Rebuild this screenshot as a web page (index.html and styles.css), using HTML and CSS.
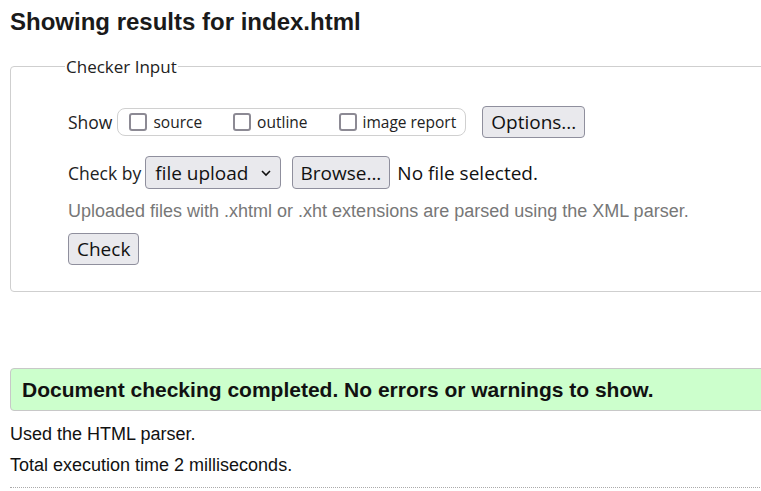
FILE: index.html
```html
<!DOCTYPE html>
<html>
<head>
<meta charset="utf-8">
<link rel="stylesheet" href="styles.css">
</head>
<body>
<div class="page">
  <h1 class="title">Showing results for index.html</h1>
  <fieldset class="checker">
    <legend class="legend">Checker Input</legend>
    <div class="row row-show">
      <span class="label">Show</span>
      <span class="group">
        <label class="opt"><span class="box"></span>source</label>
        <label class="opt"><span class="box"></span>outline</label>
        <label class="opt"><span class="box"></span>image report</label>
      </span>
      <span class="btn btn-options">Options...</span>
    </div>
    <div class="row row-check">
      <span class="label">Check by</span>
      <span class="btn select">file upload <svg class="chev" width="12" height="8" viewBox="0 0 12 8"><path d="M2 2 L6 6 L10 2" fill="none" stroke="#111" stroke-width="1.6"/></svg></span>
      <span class="btn btn-browse">Browse...</span>
      <span class="nofile">No file selected.</span>
    </div>
    <p class="hint">Uploaded files with .xhtml or .xht extensions are parsed using the XML parser.</p>
    <span class="btn btn-check">Check</span>
  </fieldset>
  <div class="success">Document checking completed. No errors or warnings to show.</div>
  <p class="info info-first">Used the HTML parser.</p>
  <p class="info">Total execution time 2 milliseconds.</p>
  <hr class="dotted">
</div>
</body>
</html>
```

FILE: styles.css
```css
html, body { margin: 0; padding: 0; background: #fff; overflow: hidden; }
body { font-family: "Liberation Sans", Arial, sans-serif; color: #111; }
.page { width: 800px; padding: 0 0 0 10px; }
.title { font-size: 24px; font-weight: bold; margin: 8px 0 0; line-height: 28px; color: #1a1a1a; }
.checker { margin: 19px 0 0; border: 1px solid #cfcfcf; border-radius: 4px; padding: 14px 0 26px 57px; font-family: "Open Sans", "Noto Sans", sans-serif; }
.legend { font-size: 17px; padding: 0 1px; margin-left: -3px; color: #222; }
.row { display: flex; align-items: center; font-size: 17.5px; color: #222; }
.row-show { height: 32px; margin-top: 14px; }
.label { margin-right: 5px; }
.row-check .label { margin-right: 4px; }
.group { display: inline-flex; align-items: center; border: 1px solid #d0d0d0; border-radius: 8px; height: 28px; box-sizing: border-box; padding: 0 9px 0 11px; }
.opt { display: inline-flex; align-items: center; margin-right: 31px; font-size: 15.5px; }
.opt:last-child { margin-right: 0; }
.box { width: 14px; height: 14px; border: 2px solid #8c8a94; border-radius: 3px; margin-right: 6px; }
.btn { display: inline-flex; align-items: center; background: #e9e9ed; border: 1px solid #8f8f9d; border-radius: 4px; font-size: 19px; color: #111; padding: 0 8px; height: 32px; box-sizing: border-box; font-family: "Open Sans", "Noto Sans", sans-serif; }
.btn-options { margin-left: 16px; padding: 0 8px 0 8px; }
.row-check { margin-top: 18px; height: 33px; }
.select { height: 33px; padding: 0 8px 0 9px; }
.chev { margin-left: 12px; }
.btn-browse { margin-left: 11px; height: 33px; padding: 0 8px 0 7px; }
.nofile { margin-left: 7px; font-size: 19px; color: #111; }
.hint { font-family: "Liberation Sans", Arial, sans-serif; font-size: 18px; line-height: 21px; color: #777; margin: 12px 0 11px; }
.btn-check { height: 32px; }
.success { margin-top: 76px; background: #ccffcc; border: 1px solid #c8c8c8; border-radius: 4px; padding: 8px 11px; font-weight: bold; font-size: 21px; line-height: 25px; color: #111; }
.info { margin: 10px 0 0; font-size: 18px; line-height: 21px; color: #111; }
.info-first { margin-top: 13px; }
.dotted { margin: 11px 0 0; border: 0; border-top: 1px dotted #aaa; }
```
